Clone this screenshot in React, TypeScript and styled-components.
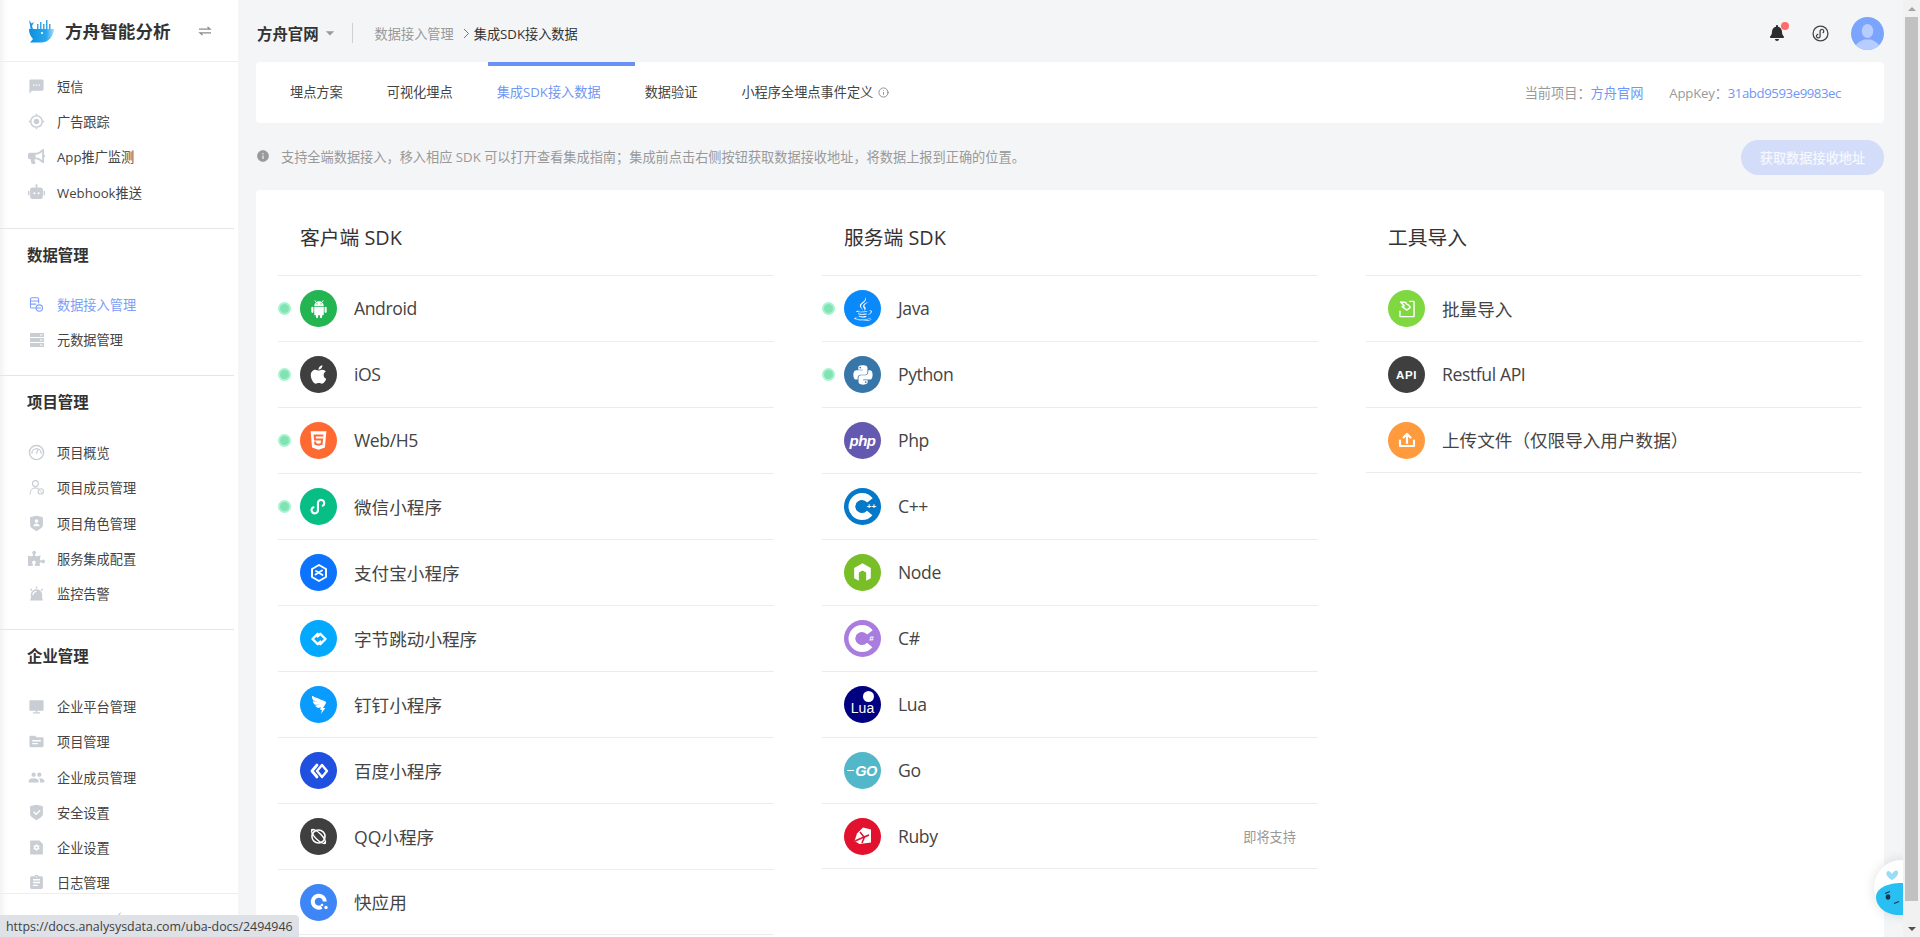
import React from "react";
import styled, { createGlobalStyle } from "styled-components";
import { ChevronLeft, Info } from "lucide-react";
import { FaApple, FaHtml5, FaJava, FaPython, FaBullhorn, FaPuzzlePiece, FaBell } from "react-icons/fa";
import { AiOutlineDingding } from "react-icons/ai";
import { MdSms, MdGpsFixed, MdTopic, MdPeople, MdAssignment, MdInfo, MdArrowDropDown } from "react-icons/md";
import { RiRobot2Fill, RiShieldUserFill, RiAlarmWarningFill, RiShieldCheckFill, RiFileSettingsFill, RiComputerFill } from "react-icons/ri";

const FONT = `"Open Sans", "Noto Sans CJK SC", sans-serif`;

const Global = createGlobalStyle`
  html, body { margin: 0; padding: 0; height: 100%; overflow: hidden; background: #f4f5f7; }
  * { box-sizing: border-box; }
  body { font-family: ${FONT}; color: #333; -webkit-font-smoothing: auto; }
`;

const Page = styled.div`
  position: relative;
  display: flex;
  width: 1920px;
  height: 937px;
  overflow: hidden;
  background: #f4f5f7;
`;

/* ---------- sidebar ---------- */
const Sidebar = styled.aside`
  flex: 0 0 238px;
  height: 937px;
  display: flex;
  flex-direction: column;
  background: #fff;
  box-shadow: inset 9px 0 8px -8px rgba(0, 0, 0, 0.09);
`;
const Brand = styled.div`
  flex: 0 0 62px;
  display: flex;
  align-items: center;
  padding: 0 26px 0 28px;
  border-bottom: 1px solid #eceef0;
`;
const BrandName = styled.div`
  margin-left: 10px;
  font-size: 17.6px;
  font-weight: 700;
  color: #333;
  white-space: nowrap;
  flex: 1;
`;
const SwapIcon = styled.span`
  display: flex;
  color: #8c8c8c;
`;
const SideScroll = styled.div`
  flex: 1;
  min-height: 0;
  overflow: hidden;
`;
const SideGroup = styled.section<{ $pb: number; $pt?: number; $line?: boolean }>`
  padding-top: ${(p) => p.$pt ?? 0}px;
  padding-bottom: ${(p) => p.$pb}px;
  margin-right: 4px;
  border-bottom: ${(p) => (p.$line ? "1px solid #e6e6e6" : "none")};
`;
const SideTitle = styled.h3<{ $mb: number }>`
  margin: 0 0 ${(p) => p.$mb}px;
  height: 54px;
  padding-left: 27px;
  line-height: 54px;
  font-size: 15.4px;
  font-weight: 700;
  color: #333;
`;
const SideItem = styled.a<{ $active?: boolean }>`
  display: flex;
  align-items: center;
  height: 35.2px;
  padding-left: 28px;
  font-size: 13.2px;
  color: ${(p) => (p.$active ? "#7d9df7" : "#444")};
  white-space: nowrap;
`;
const SideIcon = styled.span<{ $active?: boolean }>`
  flex: 0 0 17px;
  height: 17px;
  margin-right: 12px;
  display: flex;
  align-items: center;
  justify-content: center;
  font-size: 17px;
  color: ${(p) => (p.$active ? "#7d9df7" : "#c9cdd4")};
`;
const SideFoot = styled.div`
  flex: 0 0 44px;
  display: flex;
  align-items: center;
  justify-content: center;
  border-top: 1px solid #eceef0;
  color: #8c8c8c;
`;

/* ---------- content ---------- */
const Content = styled.main`
  flex: 1;
  min-width: 0;
  height: 937px;
  padding: 0 19px 0 18px;
  display: flex;
  flex-direction: column;
`;
const TopBar = styled.header`
  flex: 0 0 62px;
  display: flex;
  align-items: center;
  padding-top: 4px;
`;
const ProjectName = styled.div`
  font-size: 15.4px;
  font-weight: 600;
  color: #333;
  margin-left: 1px;
`;
const Caret = styled.span`
  display: flex;
  color: #999;
  font-size: 20px;
  margin-left: 1px;
`;
const VLine = styled.span`
  width: 1px;
  height: 20px;
  background: #d0d0d0;
  margin: 0 22px 0 12px;
`;
const Crumb = styled.span<{ $current?: boolean }>`
  font-size: 13.2px;
  color: ${(p) => (p.$current ? "#333" : "#999")};
`;
const CrumbSep = styled.span`
  display: flex;
  color: #777;
  margin: 0 4px 0 9px;
`;
const TopRight = styled.div`
  margin-left: auto;
  display: flex;
  align-items: center;
  gap: 22px;
`;
const Bell = styled.span`
  position: relative;
  display: flex;
  font-size: 16px;
  color: #2d2d2d;
  &::after {
    content: "";
    position: absolute;
    top: -3px;
    right: -4px;
    width: 8px;
    height: 8px;
    border-radius: 50%;
    background: #ff6b6b;
  }
`;
const LinkIcon = styled.span`
  display: flex;
  margin-left: 5px;
  color: #444;
`;
const Avatar = styled.span`
  display: flex;
  width: 33px;
  height: 33px;
  border-radius: 50%;
  overflow: hidden;
  background: #7ba4ff;
`;

const TabCard = styled.nav`
  position: relative;
  flex: 0 0 61px;
  display: flex;
  align-items: center;
  padding: 0 43px 0 12px;
  background: #fff;
  border-radius: 4px;
`;
const Ink = styled.span`
  position: absolute;
  top: 0;
  left: 232px;
  width: 147px;
  height: 4px;
  background: #6c91f5;
`;
const Tab = styled.a<{ $active?: boolean }>`
  padding: 0 22px;
  font-size: 13.2px;
  line-height: 61px;
  white-space: nowrap;
  display: flex;
  align-items: center;
  color: ${(p) => (p.$active ? "#7096f6" : "#444")};
`;
const TabInfo = styled.span`
  display: flex;
  margin-left: 5px;
  color: #666;
`;
const TabMeta = styled.div`
  margin-left: auto;
  display: flex;
  font-size: 13.2px;
  color: #999;
`;
const MetaPair = styled.span`
  white-space: nowrap;
  & + & {
    margin-left: 26px;
  }
`;
const MetaKey = styled.span`
  letter-spacing: -0.2px;
`;
const MetaValue = styled.span<{ $mono?: boolean }>`
  color: #7096f6;
  letter-spacing: ${(p) => (p.$mono ? "-0.42px" : "0")};
`;

const NoticeBar = styled.div`
  flex: 0 0 67px;
  display: flex;
  align-items: flex-start;
  padding-top: 17px;
`;
const NoticeText = styled.div`
  display: flex;
  align-items: center;
  height: 32px;
  font-size: 13.2px;
  color: #999;
  white-space: nowrap;
`;
const NoticeIcon = styled.span`
  display: flex;
  margin-right: 11px;
  color: #9a9a9a;
  font-size: 14px;
`;
const FetchButton = styled.button`
  margin-left: auto;
  width: 143px;
  height: 35px;
  border: 0;
  border-radius: 18px;
  background: #d3ddf9;
  color: #f6f8fe;
  font-family: ${FONT};
  font-size: 13.2px;
  font-weight: 500;
  padding: 0;
`;

const Card = styled.div`
  flex: 1;
  min-height: 0;
  padding: 0 22px;
  background: #fff;
  border-radius: 4px 4px 0 0;
  display: grid;
  grid-template-columns: repeat(3, 496px);
  column-gap: 48px;
  align-content: start;
`;
const Column = styled.section``;
const ColHead = styled.h2`
  margin: 0;
  height: 85px;
  padding: 8px 0 0 22px;
  display: flex;
  align-items: center;
  font-size: 19.8px;
  font-weight: 400;
  color: #333;
`;
const List = styled.ul`
  list-style: none;
  margin: 0;
  padding: 0;
  border-top: 1px solid #ececec;
`;
const Row = styled.li`
  height: 66px;
  display: flex;
  align-items: center;
  border-bottom: 1px solid #ececec;
  font-size: 17.6px;
  color: #444;
  white-space: nowrap;
  &:last-child {
    height: 65px;
  }
`;
const RowLabel = styled.span<{ $latin: boolean }>`
  margin-bottom: 1px;
  letter-spacing: ${(p) => (p.$latin ? "-0.4px" : "0")};
`;
const Dot = styled.span<{ $on?: boolean }>`
  flex: 0 0 13px;
  height: 13px;
  margin-right: 9px;
  border-radius: 50%;
  background: ${(p) => (p.$on ? "#82e2b4" : "transparent")};
  border: 2px solid ${(p) => (p.$on ? "#a8f3cd" : "transparent")};
`;
const Badge = styled.span<{ $bg: string }>`
  flex: 0 0 37px;
  width: 37px;
  height: 37px;
  margin-right: 17px;
  border-radius: 50%;
  overflow: hidden;
  display: flex;
  align-items: center;
  justify-content: center;
  background: ${(p) => p.$bg};
  color: #fff;
`;
const Soon = styled.span`
  margin-left: auto;
  margin-right: 22px;
  font-size: 13.2px;
  color: #999;
`;
const Small = styled.span<{ $size: number }>`
  font-size: ${(p) => p.$size}px;
  display: flex;
`;
const PhpMark = styled.span`
  font-family: "Liberation Sans", sans-serif;
  font-size: 15px;
  font-weight: 700;
  font-style: italic;
  letter-spacing: -0.5px;
  color: #fff;
`;
const LuaMark = styled.span`
  position: absolute;
  left: 0;
  right: 0;
  bottom: 7px;
  text-align: center;
  font-family: "Liberation Sans", sans-serif;
  font-size: 14px;
  color: #fff;
`;
const LuaDot = styled.span`
  position: absolute;
  top: 5px;
  right: 7px;
  width: 11px;
  height: 11px;
  border-radius: 50%;
  background: #fff;
`;
const LuaBox = styled.span`
  position: relative;
  width: 37px;
  height: 37px;
  display: block;
`;
const GoMark = styled.span`
  display: flex;
  align-items: center;
  font-family: "Liberation Sans", sans-serif;
  font-size: 14.5px;
  font-weight: 700;
  font-style: italic;
  letter-spacing: -0.6px;
  color: #fff;
  margin-left: -1px;
  &::before {
    content: "";
    width: 7px;
    height: 1px;
    margin-right: 1px;
    background: #fff;
  }
`;
const ApiMark = styled.span`
  font-family: "Liberation Sans", sans-serif;
  font-size: 11.5px;
  font-weight: 700;
  letter-spacing: 0.6px;
  color: #fff;
`;

/* ---------- overlays ---------- */
const Whale = styled.div`
  position: absolute;
  left: 1860px;
  top: 850px;
  width: 43px;
  height: 75px;
  padding: 10px 0 0 14px;
  overflow: hidden;
`;
const WhaleArt = styled.span`
  display: block;
  width: 55px;
  height: 55px;
  filter: drop-shadow(0 0 6px rgba(0, 0, 0, 0.12));
`;
const StatusBubble = styled.div`
  position: absolute;
  left: 0;
  bottom: 0;
  height: 22px;
  padding: 0 6px;
  display: flex;
  align-items: center;
  background: #dee1e6;
  border-top-right-radius: 4px;
  font-size: 12.4px;
  color: #3c4043;
  white-space: nowrap;
`;

/* ---------- window scrollbar ---------- */
const ScrollBar = styled.div`
  flex: 0 0 17px;
  height: 937px;
  display: flex;
  flex-direction: column;
  background: #f1f1f1;
`;
const ScrollArrow = styled.span<{ $down?: boolean }>`
  flex: 0 0 17px;
  display: flex;
  align-items: center;
  justify-content: center;
  &::before {
    content: "";
    border-left: 4px solid transparent;
    border-right: 4px solid transparent;
    ${(p) => (p.$down ? "border-top: 4px solid #505050;" : "border-bottom: 4px solid #a3a3a3;")}
  }
`;
const ScrollThumb = styled.span`
  flex: 1;
  margin: 0 2px 19px;
  background: #c1c1c1;
`;

/* ---------- drawings ---------- */
const Svg = ({ s = 22, children }: { s?: number; children: React.ReactNode }) => (
  <svg width={s} height={s} viewBox="0 0 24 24" fill="none" stroke="currentColor" strokeWidth={2} strokeLinecap="round" strokeLinejoin="round">
    {children}
  </svg>
);

const LogoMark = () => (
  <svg width="27" height="24" viewBox="0 0 27 24">
    <defs>
      <linearGradient id="lg" x1="0" x2="1" y1="0" y2="0">
        <stop offset="0" stopColor="#0a8fe0" />
        <stop offset="0.7" stopColor="#2aa8ee" />
        <stop offset="1" stopColor="#a5dcf8" />
      </linearGradient>
    </defs>
    <path d="M1 10h25c-.5 7-5 13.500-13 13.500H2l3-3.500C2.500 17.500 1 14 1 10z" fill="url(#lg)" />
    <path d="M1 1l2.500 3.500L6 3 4 7l1 3H2.500L2 6z" fill="#1b96e4" />
    <g fill="#39a7ea">
      <rect x="9" y="5" width="1.500" height="5" />
      <rect x="12" y="3" width="1.500" height="7" />
      <rect x="15" y="5" width="1.500" height="5" />
      <rect x="18" y="1" width="1.500" height="9" />
      <rect x="21" y="5" width="1.500" height="5" />
    </g>
    <circle cx="14" cy="14" r="1.100" fill="#fff" />
  </svg>
);

const SwapGlyph = () => (
  <svg width="14" height="14" viewBox="0 0 14 14" fill="none" stroke="currentColor" strokeWidth="1.300">
    <path d="M1 5.200h11L9.500 3" />
    <path d="M13 8.800H2L4.500 11" />
  </svg>
);

const MiniGlyph = ({ s = 22, w = 2.2 }: { s?: number; w?: number }) => (
  <svg width={s} height={s} viewBox="0 0 24 24" fill="none" stroke="currentColor" strokeWidth={w} strokeLinecap="round">
    <path d="M6.700 12.800A3.300 3.300 0 1 0 11.400 15.500V8.500A3.300 3.300 0 1 1 16.500 11.200" />
  </svg>
);

const AndroidBot = () => (
  <svg width="22" height="22" viewBox="0 0 24 24" fill="#fff">
    <path d="M6.800 8.800a5.200 5.200 0 0 1 10.400 0z" />
    <path d="M8.700 4.500L7.600 2.800M15.300 4.500l1.100-1.700" stroke="#fff" strokeWidth="0.900" strokeLinecap="round" />
    <circle cx="9.800" cy="6.400" r="0.700" fill="#22b552" />
    <circle cx="14.200" cy="6.400" r="0.700" fill="#22b552" />
    <path d="M6.800 9.500h10.400v8.200a1 1 0 0 1-1 1H7.800a1 1 0 0 1-1-1z" />
    <rect x="3.600" y="9.500" width="2.400" height="6.800" rx="1.200" />
    <rect x="18" y="9.500" width="2.400" height="6.800" rx="1.200" />
    <rect x="8.600" y="18" width="2.400" height="4" rx="1.200" />
    <rect x="13" y="18" width="2.400" height="4" rx="1.200" />
  </svg>
);

const Alipay = () => (
  <Svg s={24}>
    <path d="M12 4l7 4v8l-7 4-7-4V8z" />
    <path d="M8.500 13.500L15 9.500M9 10l6.500 4" strokeWidth={1.800} />
  </Svg>
);
const Byte = () => (
  <Svg s={26}>
    <path d="M10.800 7.200L6 12l4.800 4.800 2.500-2.500" strokeWidth={2.200} />
    <path d="M13.200 16.800L18 12l-4.800-4.800-2.500 2.500" strokeWidth={2.200} />
  </Svg>
);
const Baidu = () => (
  <Svg s={24}>
    <path d="M10 6l-5 6 5 6" strokeWidth={2.800} />
    <path d="M15 6l5 6-5 6-5-6z" strokeWidth={2.400} />
  </Svg>
);
const QQPlanet = () => (
  <Svg s={25}>
    <circle cx="12" cy="12" r="6.300" strokeWidth={1.500} />
    <ellipse cx="12" cy="12" rx="9" ry="3" transform="rotate(45 12 12)" strokeWidth={1.300} />
    <circle cx="5.800" cy="5.800" r="1.100" fill="currentColor" stroke="none" />
    <circle cx="18.200" cy="18.200" r="1.100" fill="currentColor" stroke="none" />
  </Svg>
);
const QuickApp = () => (
  <svg width="24" height="24" viewBox="0 0 24 24" fill="none">
    <path d="M14.500 17A6 6 0 1 1 17.800 11.500" stroke="#fff" strokeWidth="4" />
    <circle cx="15" cy="15" r="1.300" fill="#fff" />
    <circle cx="19" cy="17.500" r="1.700" fill="#fff" />
  </svg>
);
const NodeMark = () => (
  <svg width="25" height="25" viewBox="0 0 24 24">
    <path d="M12 3l8 4.600v9.800l-4.500 2.600V12l-3.500-2-3.500 2v8L4 17.400V7.600z" fill="#fff" />
  </svg>
);
const CMark = ({ glyph, color }: { glyph: string; color: string }) => (
  <svg width="37" height="37" viewBox="0 0 37 37">
    <circle cx="18" cy="18.500" r="10" fill="none" stroke="#fff" strokeWidth="7" strokeDasharray="49 13.800" strokeDashoffset="-6.900" />
    <circle cx="17.500" cy="18.500" r="6" fill={color} />
    <text x="27.500" y="21" textAnchor="middle" fontSize="8" fontWeight="700" fill="#fff" fontFamily="Liberation Sans">{glyph}</text>
  </svg>
);
const Ruby = () => (
  <svg width="24" height="24" viewBox="0 0 24 24">
    <path d="M12 3.500l8 2v13l-11.500 1.500L3.500 17 6 9.500z" fill="#fff" />
    <path d="M9 8l4 5 5-2-4.500 2L11 19M4 17l9-4" stroke="#e2112d" strokeWidth="1.500" fill="none" />
  </svg>
);
const Batch = () => (
  <Svg s={26}>
    <path d="M14.500 5H18.500V19H5.500V14" strokeWidth={1.300} />
    <path d="M6 5.500l5 .5 .5 1.500c1.500 0 2.500 1 3.500 3L12 13 7.500 9.800 9.500 9z" strokeWidth={1.300} />
  </Svg>
);
const Upload = () => (
  <Svg s={24}>
    <path d="M5 12.500V18h14v-5.500" strokeWidth={2.200} />
    <path d="M12 15V6M8.500 9.500L12 6l3.500 3.500" strokeWidth={2.200} />
  </Svg>
);

const DataIcon = () => (
  <Svg s={17}>
    <path d="M13 17H5.500a2 2 0 0 1-2-2V4.500a2 2 0 0 1 2-2H13a2 2 0 0 1 2 2V10" strokeWidth={1.500} />
    <path d="M3.500 7h11.500M3.500 11.500H11" strokeWidth={1.500} />
    <circle cx="16" cy="17" r="4.500" strokeWidth={1.500} />
    <path d="M14 17h4" strokeWidth={1.500} />
  </Svg>
);
const GaugeIcon = () => (
  <Svg s={17}>
    <circle cx="12" cy="12" r="10" strokeWidth={2} />
    <path d="M5.500 13a6.500 6.500 0 0 1 13 0M12 13l2-5" strokeWidth={1.800} />
  </Svg>
);
const MemberIcon = () => (
  <Svg s={17}>
    <circle cx="10.500" cy="6.500" r="4.200" strokeWidth={1.500} />
    <path d="M3 21c0-5 3-8.500 7.500-8.500 1.500 0 2.500.4 3.500 1" strokeWidth={1.500} />
    <circle cx="18" cy="17.500" r="3.800" strokeWidth={1.500} />
    <path d="M16 15.500l4 4" strokeWidth={1.300} />
  </Svg>
);
const ServerIcon = () => (
  <svg width="16" height="16" viewBox="0 0 16 16" fill="currentColor">
    <path d="M1 1h14v4H1zM1 6h14v4H1zM1 11h14v4H1z" />
    <path d="M11 2.500h2.500v1H11zM11 7.500h2.500v1H11zM11 12.500h2.500v1H11z" fill="#fff" />
  </svg>
);

const Silhouette = () => (
  <svg width="33" height="33" viewBox="0 0 33 33">
    <ellipse cx="16.500" cy="14" rx="5.800" ry="7" fill="#b7ccff" />
    <path d="M4 31c1-6 7-7 9-8.500h7c2 1.500 8 2.500 9 8.500-3 3-22 3-25 0z" fill="#b7ccff" />
  </svg>
);

const WhaleMark = () => (
  <svg width="55" height="55" viewBox="0 0 55 55">
    <circle cx="27.500" cy="27.500" r="27.500" fill="#fff" />
    <path d="M18 20c-4-2-7-6-5-8.500 1.500-1.500 4 .5 5 2.500 1-2 3.500-4.500 5.500-3 2 2-1 7-5.500 9z" fill="#9adcf5" />
    <path d="M2 37c0-8 10-14 26-14 11 0 21 4 27 12v20H25C12 55 2 47 2 37z" fill="#28bff2" />
    <ellipse cx="14" cy="37" rx="2.300" ry="2.800" fill="#1b3450" />
    <path d="M11 33.500l5-2M20 43.500l5-2" stroke="#1b3450" strokeWidth="1.200" fill="none" />
  </svg>
);

/* ---------- data ---------- */
type Item = { label: string; icon: React.ReactNode; active?: boolean };
const i = (label: string, icon: React.ReactNode, active?: boolean): Item => ({ label, icon, active });

const firstItems = [
  i("短信", <MdSms />),
  i("广告跟踪", <MdGpsFixed />),
  i("App推广监测", <FaBullhorn />),
  i("Webhook推送", <RiRobot2Fill />),
];
const groups: { title: string; pb: number; mb: number; line: boolean; items: Item[] }[] = [
  {
    title: "数据管理",
    pb: 18,
    mb: 4,
    line: true,
    items: [i("数据接入管理", <DataIcon />, true), i("元数据管理", <ServerIcon />)],
  },
  {
    title: "项目管理",
    pb: 18,
    mb: 5,
    line: true,
    items: [
      i("项目概览", <GaugeIcon />),
      i("项目成员管理", <MemberIcon />),
      i("项目角色管理", <RiShieldUserFill />),
      i("服务集成配置", <FaPuzzlePiece />),
      i("监控告警", <RiAlarmWarningFill />),
    ],
  },
  {
    title: "企业管理",
    pb: 0,
    mb: 5,
    line: false,
    items: [
      i("企业平台管理", <RiComputerFill />),
      i("项目管理", <MdTopic />),
      i("企业成员管理", <MdPeople />),
      i("安全设置", <RiShieldCheckFill />),
      i("企业设置", <RiFileSettingsFill />),
      i("日志管理", <MdAssignment />),
    ],
  },
];

type Sdk = { label: string; bg: string; art: React.ReactNode; on?: boolean; soon?: boolean };
const columns: { title: string; rows: Sdk[] }[] = [
  {
    title: "客户端 SDK",
    rows: [
      { label: "Android", bg: "#22b552", on: true, art: <AndroidBot /> },
      { label: "iOS", bg: "#3f3f3f", on: true, art: <Small $size={21}><FaApple /></Small> },
      { label: "Web/H5", bg: "#ff6a33", on: true, art: <Small $size={21}><FaHtml5 /></Small> },
      { label: "微信小程序", bg: "#07bf85", on: true, art: <MiniGlyph s={23} /> },
      { label: "支付宝小程序", bg: "#0c73ff", art: <Alipay /> },
      { label: "字节跳动小程序", bg: "#03a9ff", art: <Byte /> },
      { label: "钉钉小程序", bg: "#0a9bff", art: <Small $size={22}><AiOutlineDingding /></Small> },
      { label: "百度小程序", bg: "#2050e0", art: <Baidu /> },
      { label: "QQ小程序", bg: "#3f3f3f", art: <QQPlanet /> },
      { label: "快应用", bg: "#3e86f6", art: <QuickApp /> },
    ],
  },
  {
    title: "服务端 SDK",
    rows: [
      { label: "Java", bg: "#0a89fb", on: true, art: <Small $size={24}><FaJava /></Small> },
      { label: "Python", bg: "#3776a9", on: true, art: <Small $size={22}><FaPython /></Small> },
      { label: "Php", bg: "#6459b0", art: <PhpMark>php</PhpMark> },
      { label: "C++", bg: "#0579c9", art: <CMark glyph="++" color="#0579c9" /> },
      { label: "Node", bg: "#78bf27", art: <NodeMark /> },
      { label: "C#", bg: "#a97cdf", art: <CMark glyph="#" color="#a97cdf" /> },
      { label: "Lua", bg: "#000080", art: <LuaBox><LuaDot /><LuaMark>Lua</LuaMark></LuaBox> },
      { label: "Go", bg: "#52b7c8", art: <GoMark>GO</GoMark> },
      { label: "Ruby", bg: "#e2112d", soon: true, art: <Ruby /> },
    ],
  },
  {
    title: "工具导入",
    rows: [
      { label: "批量导入", bg: "#7fd83f", art: <Batch /> },
      { label: "Restful API", bg: "#3f3f3f", art: <ApiMark>API</ApiMark> },
      { label: "上传文件（仅限导入用户数据）", bg: "#ff9a3d", art: <Upload /> },
    ],
  },
];

const tabs = ["埋点方案", "可视化埋点", "集成SDK接入数据", "数据验证"];

export default function App() {
  return (
    <Page>
      <Global />
      <Sidebar>
        <Brand>
          <LogoMark />
          <BrandName>方舟智能分析</BrandName>
          <SwapIcon><SwapGlyph /></SwapIcon>
        </Brand>
        <SideScroll>
          <SideGroup $pt={7} $pb={18} $line>
            {firstItems.map((it) => (
              <SideItem key={it.label}>
                <SideIcon>{it.icon}</SideIcon>
                {it.label}
              </SideItem>
            ))}
          </SideGroup>
          {groups.map((g) => (
            <SideGroup key={g.title} $pb={g.pb} $line={g.line}>
              <SideTitle $mb={g.mb}>{g.title}</SideTitle>
              {g.items.map((it) => (
                <SideItem key={it.label} $active={it.active}>
                  <SideIcon $active={it.active}>{it.icon}</SideIcon>
                  {it.label}
                </SideItem>
              ))}
            </SideGroup>
          ))}
        </SideScroll>
        <SideFoot>
          <ChevronLeft size={12} strokeWidth={1.5} />
        </SideFoot>
      </Sidebar>

      <Content>
        <TopBar>
          <ProjectName>方舟官网</ProjectName>
          <Caret><MdArrowDropDown /></Caret>
          <VLine />
          <Crumb>数据接入管理</Crumb>
          <CrumbSep>
            <svg width="7" height="11" viewBox="0 0 7 11" fill="none" stroke="currentColor" strokeWidth="1">
              <path d="M1 1l4.500 4.500L1 10" />
            </svg>
          </CrumbSep>
          <Crumb $current>集成SDK接入数据</Crumb>
          <TopRight>
            <Bell><FaBell /></Bell>
            <LinkIcon>
              <svg width="17" height="17" viewBox="0 0 24 24" fill="none" stroke="currentColor" strokeWidth="1.800" strokeLinecap="round">
                <circle cx="12" cy="12" r="10.500" />
                <path d="M8.200 13.200A2.600 2.600 0 1 0 11.400 15V9A2.600 2.600 0 1 1 15.600 10.800" />
              </svg>
            </LinkIcon>
            <Avatar><Silhouette /></Avatar>
          </TopRight>
        </TopBar>

        <TabCard>
          <Ink />
          {tabs.map((t) => (
            <Tab key={t} $active={t === "集成SDK接入数据"}>{t}</Tab>
          ))}
          <Tab>
            小程序全埋点事件定义
            <TabInfo><Info size={11} strokeWidth={1.5} /></TabInfo>
          </Tab>
          <TabMeta>
            <MetaPair>当前项目：<MetaValue>方舟官网</MetaValue></MetaPair>
            <MetaPair><MetaKey>AppKey：</MetaKey><MetaValue $mono>31abd9593e9983ec</MetaValue></MetaPair>
          </TabMeta>
        </TabCard>

        <NoticeBar>
          <NoticeText>
            <NoticeIcon><MdInfo /></NoticeIcon>
            支持全端数据接入，移入相应 SDK 可以打开查看集成指南；集成前点击右侧按钮获取数据接收地址，将数据上报到正确的位置。
          </NoticeText>
          <FetchButton>获取数据接收地址</FetchButton>
        </NoticeBar>

        <Card>
          {columns.map((c) => (
            <Column key={c.title}>
              <ColHead>{c.title}</ColHead>
              <List>
                {c.rows.map((r) => (
                  <Row key={r.label}>
                    <Dot $on={r.on} />
                    <Badge $bg={r.bg}>{r.art}</Badge>
                    <RowLabel $latin={/^[\x20-\x7e]+$/.test(r.label)}>{r.label}</RowLabel>
                    {r.soon && <Soon>即将支持</Soon>}
                  </Row>
                ))}
              </List>
            </Column>
          ))}
        </Card>
      </Content>

      <ScrollBar>
        <ScrollArrow />
        <ScrollThumb />
        <ScrollArrow $down />
      </ScrollBar>

      <Whale><WhaleArt><WhaleMark /></WhaleArt></Whale>
      <StatusBubble>https://docs.analysysdata.com/uba-docs/2494946</StatusBubble>
    </Page>
  );
}
